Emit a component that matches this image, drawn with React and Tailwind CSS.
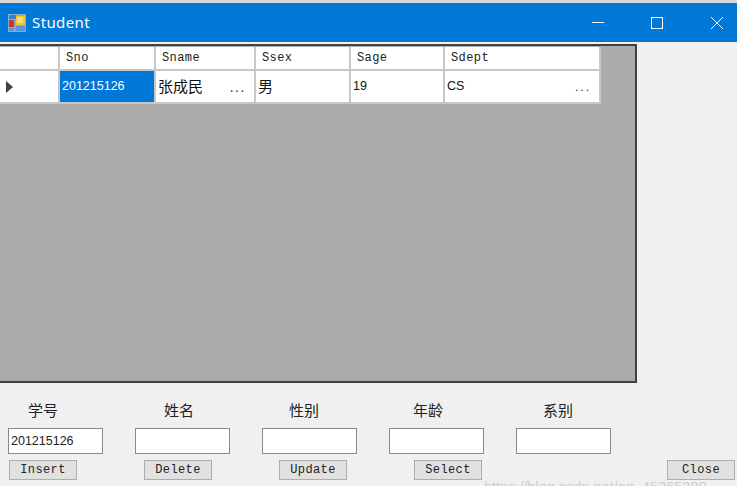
const columns = [
  { name: 'Sno', width: 'w-[96px]', value: '201215126', selected: true },
  { name: 'Sname', width: 'w-[100px]', value: '张成民', cjk: true, more: true },
  { name: 'Ssex', width: 'w-[95px]', value: '男', cjk: true },
  { name: 'Sage', width: 'w-[94px]', value: '19' },
  { name: 'Sdept', width: 'w-[156px]', value: 'CS', more: true },
];

const mono = "font-['Liberation_Mono','Noto_Sans_CJK_SC',monospace]";
const cjkFont = "font-['Noto_Sans_CJK_SC',sans-serif]";

function WinIcon() {
  return (
    <svg width="18" height="18" viewBox="0 0 18 18">
      <rect width="18" height="18" fill="#8fa9c9" />
      <rect x="1" y="1" width="7" height="4" fill="#3b7fd0" />
      <rect x="1" y="6" width="5" height="7" fill="#c8372d" />
      <rect x="8" y="2" width="9" height="9" fill="#f2c230" />
      <rect x="9" y="3" width="6" height="6" fill="#f8dc70" />
      <rect x="8" y="12" width="9" height="5" fill="#5b93dd" />
      <rect x="1" y="14" width="5" height="3" fill="#5b93dd" />
    </svg>
  );
}

function TitleBar() {
  return (
    <div className="h-[39px] bg-[#0078d7] flex items-center text-white">
      <div className="ml-[8px]">
        <WinIcon />
      </div>
      <span className="ml-[6px] text-[15px] tracking-[0.4px] font-['Noto_Sans',sans-serif]">Student</span>
      <div className="ml-auto flex items-center">
        <svg width="59" height="39" viewBox="0 0 59 39" className="mr-0">
          <path d="M0 19.5H12" stroke="#fff" strokeWidth="1" />
        </svg>
        <svg width="59" height="39" viewBox="0 0 59 39">
          <rect x="0.5" y="14.5" width="11" height="11" fill="none" stroke="#fff" strokeWidth="1" />
        </svg>
        <svg width="27" height="39" viewBox="0 0 27 39">
          <path d="M1 14L13 26M13 14L1 26" stroke="#fff" strokeWidth="1" />
        </svg>
      </div>
    </div>
  );
}

function Grid() {
  return (
    <div className="w-[637px] h-[339px] mt-[2px] bg-[#ababab] border-t-[2px] border-r-[2px] border-b-[2px] border-[#404040] pt-[1px]">
      <div className="flex h-[24px]">
        <div className="w-[60px] bg-white border-r-[2px] border-b-[2px] border-[#c8c8c8]" />
        {columns.map((c) => (
          <div
            key={c.name}
            className={`${c.width} bg-white border-r-[2px] border-b-[2px] border-[#c8c8c8] pl-[6px] flex items-center text-[12px] tracking-[0.4px] text-[#222] ${mono}`}
          >
            {c.name}
          </div>
        ))}
      </div>
      <div className="flex h-[33px]">
        <div className="w-[60px] bg-white border-r-[2px] border-b-[2px] border-[#c8c8c8] flex items-center pl-[6px]">
          <div className="w-0 h-0 border-y-[6px] border-y-transparent border-l-[7px] border-l-[#404040]" />
        </div>
        {columns.map((c) => (
          <div
            key={c.name}
            className={`${c.width} border-r-[2px] border-b-[2px] border-[#c8c8c8] pl-[2px] pr-[8px] flex items-center justify-between ${
              c.selected ? 'bg-[#0078d7] text-white' : 'bg-white text-[#111]'
            } ${c.cjk ? `text-[15px] ${cjkFont}` : "text-[12.5px] font-['Liberation_Sans',sans-serif]"}`}
          >
            <span>{c.value}</span>
            {c.more && <span className="text-[12px] tracking-[2px] text-[#333]">...</span>}
          </div>
        ))}
      </div>
    </div>
  );
}

const labels = [
  { text: '学号', width: 'w-[30px]', ml: 'ml-[28px]' },
  { text: '姓名', width: 'w-[30px]', ml: 'ml-[106px]' },
  { text: '性别', width: 'w-[30px]', ml: 'ml-[95px]' },
  { text: '年龄', width: 'w-[30px]', ml: 'ml-[94px]' },
  { text: '系别', width: 'w-[30px]', ml: 'ml-[100px]' },
];

const inputs = ['201215126', '', '', '', ''];

const buttons = [
  { text: 'Insert', ml: 'ml-[9px]' },
  { text: 'Delete', ml: 'ml-[67px]' },
  { text: 'Update', ml: 'ml-[67px]' },
  { text: 'Select', ml: 'ml-[67px]' },
  { text: 'Close', ml: 'ml-[185px]' },
];

function Form() {
  return (
    <div className="relative">
      <div className={`flex mt-[17px] h-[20px] items-center text-[15px] text-[#222] ${cjkFont}`}>
        {labels.map((l) => (
          <span key={l.text} className={`${l.width} ${l.ml} whitespace-nowrap`}>
            {l.text}
          </span>
        ))}
      </div>
      <div className="flex mt-[8px] ml-[8px] gap-[32px]">
        {inputs.map((v, i) => (
          <div
            key={i}
            className="w-[95px] h-[26px] bg-white border border-[#8a8a8a] flex items-center pl-[2px] text-[12.5px] text-[#222] font-['Liberation_Sans',sans-serif]"
          >
            {v}
          </div>
        ))}
      </div>
      <div className="flex mt-[6px]">
        {buttons.map((b) => (
          <div
            key={b.text}
            className={`${b.ml} w-[68px] h-[20px] bg-[#e1e1e1] border border-[#adadad] flex items-center justify-center text-[12px] tracking-[0.4px] text-[#222] ${mono}`}
          >
            {b.text}
          </div>
        ))}
      </div>
      <span className="absolute left-[484px] top-[77px] text-[14.5px] whitespace-nowrap text-[#c9c9c9]/90 font-['Liberation_Sans',sans-serif]">
        https://blog.csdn.net/qq_45265380
      </span>
    </div>
  );
}

export default function App() {
  return (
    <div className="w-[737px] h-[486px] overflow-hidden bg-[#f0f0f0]">
      <div className="h-[3px] bg-[#d9d9d9]" />
      <TitleBar />
      <Grid />
      <Form />
    </div>
  );
}
